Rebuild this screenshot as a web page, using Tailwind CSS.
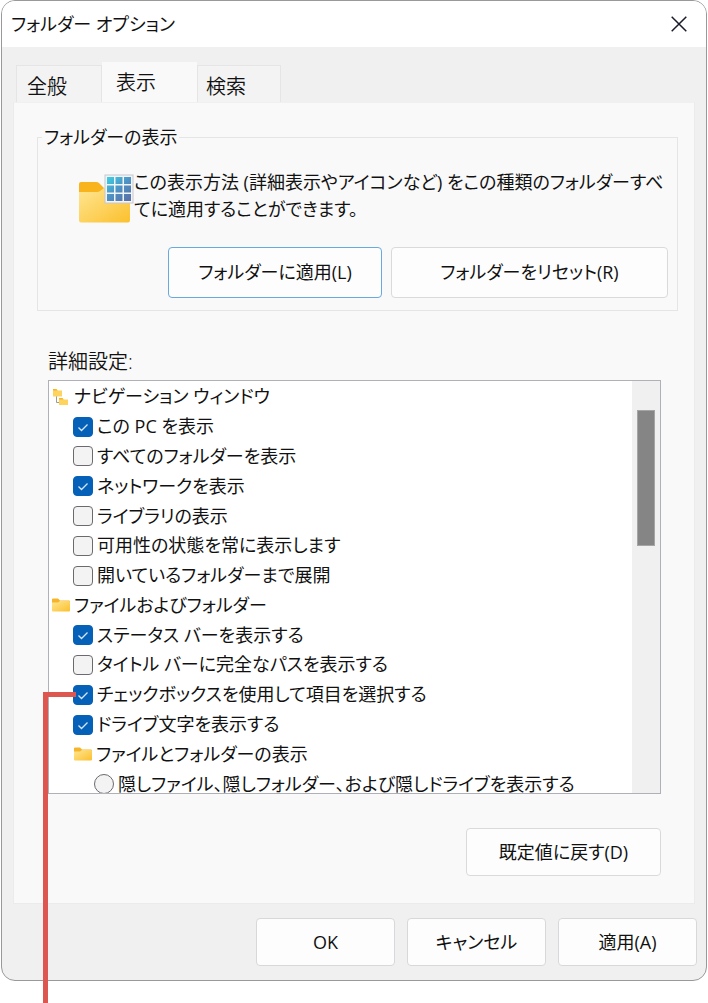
<!DOCTYPE html>
<html lang="ja">
<head>
    <meta charset="UTF-8">
    <meta name="viewport" content="width=device-width, initial-scale=1.0">
    <title>フォルダー オプション</title>
    <script src="https://cdn.jsdelivr.net/npm/@tailwindcss/browser@4"></script>
</head>
<body class="relative min-h-screen bg-white text-[#111] text-lg leading-[27px] font-['Open_Sans','Noto_Sans_CJK_JP',sans-serif] [font-feature-settings:'palt']">
    <svg class="absolute size-0">
        <defs>
            <linearGradient id="folderFill" x1="0" y1="0" x2="1" y2="1">
                <stop offset="0" stop-color="#ffe694"/>
                <stop offset="1" stop-color="#fbc02d"/>
            </linearGradient>
            <linearGradient id="gridFill" gradientUnits="userSpaceOnUse" x1="30" y1="2" x2="50" y2="26">
                <stop offset="0" stop-color="#3ed2e2"/>
                <stop offset="0.5" stop-color="#4e94c6"/>
                <stop offset="1" stop-color="#5a72a8"/>
            </linearGradient>
            <symbol id="folder" viewBox="0 0 18 14">
                <path d="M0 1.5Q0 .5 1 .5H6L8 2.5H17Q18 2.5 18 3.5V6H0Z" fill="#f5b52a"/>
                <path d="M0 4.5H6L8 3H17Q18 3 18 4V12.5Q18 13.5 17 13.5H1Q0 13.5 0 12.5Z" fill="url(#folderFill)"/>
            </symbol>
            <symbol id="check" viewBox="0 0 20 20">
                <path d="M5.5 10.5L8.5 13.5L14.5 7.5" fill="none" stroke="#d5e8fa" stroke-width="1.3"/>
            </symbol>
        </defs>
    </svg>

    <div class="mx-px flex flex-col overflow-hidden rounded-[14px] border border-[#999] bg-[#f0f0f0]">
        <header class="flex h-[46px] items-center justify-between bg-white pl-[9px] pr-[19px]">
            <h1>フォルダー オプション</h1>
            <button type="button" aria-label="閉じる">
                <svg class="size-4" viewBox="0 0 16 16" fill="none" stroke="#1a1a28" stroke-width="1.5"><path d="M.7 .7L15.3 15.3M15.3 .7L.7 15.3"/></svg>
            </button>
        </header>

        <!-- Tabs -->
        <nav class="flex items-end pl-3.5 pt-[15px] text-xl font-[350] leading-[27px]">
            <button type="button" class="h-[37px] w-[86px] border border-b-0 border-[#e5e5e5] bg-[#f3f3f3] pl-2.5 pt-1 text-left">全般</button>
            <button type="button" class="h-10 w-[95px] bg-[#f9f9f9] pl-3.5 text-left">表示</button>
            <button type="button" class="h-[37px] w-[84px] border border-b-0 border-[#e5e5e5] bg-[#f3f3f3] pl-2 pt-1 text-left">検索</button>
        </nav>

        <!-- View panel -->
        <main class="mx-[11px] flex flex-col border border-[#ebebeb] border-t-[#f0f0f0] bg-[#f9f9f9] pb-[27px] pl-[23px] pr-4 pt-[21px]">
            <fieldset class="border border-[#e5e5e5] pb-3 pl-10 pr-[9px]">
                <legend class="-ml-9 px-0.5">フォルダーの表示</legend>
                <div class="flex pt-[18px]">
                    <svg class="mt-[5px] h-[52px] w-14 shrink-0" viewBox="0 0 56 52">
                        <path d="M1 10Q1 8 3 8H18Q20 8 21 9L26 14H50V22H1Z" fill="#f9b31c"/>
                        <path d="M1 18H19Q21 18 22 17L26 14H50Q52 14 52 16V46Q52 48.500 50 48.500H3Q1 48.500 1 46Z" fill="url(#folderFill)"/>
                        <rect x="27" y="1" width="28" height="28" fill="#f1f5f9" stroke="#c8c5cb"/>
                        <path d="M29 3h7v7h-7zM37.500 3h7v7h-7zM46 3h7v7h-7zM29 11.500h7v7h-7zM37.500 11.500h7v7h-7zM46 11.500h7v7h-7zM29 20h7v7h-7zM37.500 20h7v7h-7zM46 20h7v7h-7z" fill="url(#gridFill)"/>
                    </svg>
                    <p>この表示方法 (詳細表示やアイコンなど) をこの種類のフォルダーすべ<wbr>てに適用することができます。</p>
                </div>
                <div class="mt-[21px] flex gap-[9px] pl-[90px]">
                    <button type="button" class="h-[51px] w-[214px] rounded border border-[#69a9dc] bg-[#fdfdfd]">フォルダーに適用(L)</button>
                    <button type="button" class="h-[51px] flex-1 rounded border border-[#dadada] bg-[#fdfdfd]">フォルダーをリセット(R)</button>
                </div>
            </fieldset>

            <h2 class="ml-[11px] mt-[37px] text-xl font-[350] leading-[27px]">詳細設定:</h2>
            <div class="ml-[11px] mr-[17px] mt-[5px] flex h-[414px] overflow-hidden border border-[#b0b0b8] bg-white">
                <ul class="mt-px grid h-[417px] flex-1 auto-rows-fr whitespace-nowrap">
                    <li class="flex items-center gap-1 pl-[3px]">
                        <svg class="h-5 w-[18px]" viewBox="0 0 18 20">
                            <path d="M4.500 8V15.500H9" fill="none" stroke="#9a9a9a"/>
                            <path d="M1 2.500H4.500L6 3.500H10V9.500H1Z" fill="#ffd45e"/>
                            <path d="M1 2H4.500L5.500 3.500H1Z" fill="#f5b52a"/>
                            <path d="M7 11.500H10.500L12 12.500H16V18H7Z" fill="#ffd45e"/>
                            <path d="M7 11H10.500L11.500 12.500H7Z" fill="#f5b52a"/>
                        </svg>
                        ナビゲーション ウィンドウ
                    </li>
                    <li class="flex items-center pl-6">
                        <label class="flex items-center gap-1"><span class="grid"><input type="checkbox" checked class="peer col-start-1 row-start-1 size-5 appearance-none rounded border border-[#6a6a70] bg-[#f3f3f3] checked:border-[#0560b8] checked:bg-[#0560b8]"><svg class="pointer-events-none invisible col-start-1 row-start-1 size-5 peer-checked:visible"><use href="#check"/></svg></span>この PC を表示</label>
                    </li>
                    <li class="flex items-center pl-6">
                        <label class="flex items-center gap-1"><span class="grid"><input type="checkbox" class="peer col-start-1 row-start-1 size-5 appearance-none rounded border border-[#6a6a70] bg-[#f3f3f3] checked:border-[#0560b8] checked:bg-[#0560b8]"><svg class="pointer-events-none invisible col-start-1 row-start-1 size-5 peer-checked:visible"><use href="#check"/></svg></span>すべてのフォルダーを表示</label>
                    </li>
                    <li class="flex items-center pl-6">
                        <label class="flex items-center gap-1"><span class="grid"><input type="checkbox" checked class="peer col-start-1 row-start-1 size-5 appearance-none rounded border border-[#6a6a70] bg-[#f3f3f3] checked:border-[#0560b8] checked:bg-[#0560b8]"><svg class="pointer-events-none invisible col-start-1 row-start-1 size-5 peer-checked:visible"><use href="#check"/></svg></span>ネットワークを表示</label>
                    </li>
                    <li class="flex items-center pl-6">
                        <label class="flex items-center gap-1"><span class="grid"><input type="checkbox" class="peer col-start-1 row-start-1 size-5 appearance-none rounded border border-[#6a6a70] bg-[#f3f3f3] checked:border-[#0560b8] checked:bg-[#0560b8]"><svg class="pointer-events-none invisible col-start-1 row-start-1 size-5 peer-checked:visible"><use href="#check"/></svg></span>ライブラリの表示</label>
                    </li>
                    <li class="flex items-center pl-6">
                        <label class="flex items-center gap-1"><span class="grid"><input type="checkbox" class="peer col-start-1 row-start-1 size-5 appearance-none rounded border border-[#6a6a70] bg-[#f3f3f3] checked:border-[#0560b8] checked:bg-[#0560b8]"><svg class="pointer-events-none invisible col-start-1 row-start-1 size-5 peer-checked:visible"><use href="#check"/></svg></span>可用性の状態を常に表示します</label>
                    </li>
                    <li class="flex items-center pl-6">
                        <label class="flex items-center gap-1"><span class="grid"><input type="checkbox" class="peer col-start-1 row-start-1 size-5 appearance-none rounded border border-[#6a6a70] bg-[#f3f3f3] checked:border-[#0560b8] checked:bg-[#0560b8]"><svg class="pointer-events-none invisible col-start-1 row-start-1 size-5 peer-checked:visible"><use href="#check"/></svg></span>開いているフォルダーまで展開</label>
                    </li>
                    <li class="flex items-center gap-1 pl-[3px]">
                        <svg class="h-3.5 w-[18px]"><use href="#folder"/></svg>
                        ファイルおよびフォルダー
                    </li>
                    <li class="flex items-center pl-6">
                        <label class="flex items-center gap-1"><span class="grid"><input type="checkbox" checked class="peer col-start-1 row-start-1 size-5 appearance-none rounded border border-[#6a6a70] bg-[#f3f3f3] checked:border-[#0560b8] checked:bg-[#0560b8]"><svg class="pointer-events-none invisible col-start-1 row-start-1 size-5 peer-checked:visible"><use href="#check"/></svg></span>ステータス バーを表示する</label>
                    </li>
                    <li class="flex items-center pl-6">
                        <label class="flex items-center gap-1"><span class="grid"><input type="checkbox" class="peer col-start-1 row-start-1 size-5 appearance-none rounded border border-[#6a6a70] bg-[#f3f3f3] checked:border-[#0560b8] checked:bg-[#0560b8]"><svg class="pointer-events-none invisible col-start-1 row-start-1 size-5 peer-checked:visible"><use href="#check"/></svg></span>タイトル バーに完全なパスを表示する</label>
                    </li>
                    <li class="flex items-center pl-6">
                        <label class="flex items-center gap-1"><span class="grid"><input type="checkbox" checked class="peer col-start-1 row-start-1 size-5 appearance-none rounded border border-[#6a6a70] bg-[#f3f3f3] checked:border-[#0560b8] checked:bg-[#0560b8]"><svg class="pointer-events-none invisible col-start-1 row-start-1 size-5 peer-checked:visible"><use href="#check"/></svg></span>チェックボックスを使用して項目を選択する</label>
                    </li>
                    <li class="flex items-center pl-6">
                        <label class="flex items-center gap-1"><span class="grid"><input type="checkbox" checked class="peer col-start-1 row-start-1 size-5 appearance-none rounded border border-[#6a6a70] bg-[#f3f3f3] checked:border-[#0560b8] checked:bg-[#0560b8]"><svg class="pointer-events-none invisible col-start-1 row-start-1 size-5 peer-checked:visible"><use href="#check"/></svg></span>ドライブ文字を表示する</label>
                    </li>
                    <li class="flex items-center gap-1 pl-[25px]">
                        <svg class="h-3.5 w-[18px]"><use href="#folder"/></svg>
                        ファイルとフォルダーの表示
                    </li>
                    <li class="flex items-center pl-[45px]">
                        <label class="flex items-center gap-1"><input type="radio" name="hidden-files" class="size-5 appearance-none rounded-full border border-[#6a6a70] bg-[#f3f3f3]">隠しファイル、隠しフォルダー、および隠しドライブを表示する</label>
                    </li>
                </ul>
                <!-- Scrollbar -->
                <div class="w-7 bg-[#f0f0f0] pl-[5px] pt-[29px]">
                    <div class="h-[136px] w-[18px] border border-[#a5a5a5] bg-[#858585]"></div>
                </div>
            </div>
            <button type="button" class="mr-[17px] mt-[34px] h-12 w-[195px] self-end rounded border border-[#dadada] bg-[#fdfdfd]">既定値に戻す(D)</button>
        </main>

        <footer class="flex justify-end gap-3 pb-3.5 pr-[9px] pt-3.5">
            <button type="button" class="h-12 w-[139px] rounded border border-[#d8d8da] bg-[#fdfdfd]">OK</button>
            <button type="button" class="h-12 w-[139px] rounded border border-[#d8d8da] bg-[#fdfdfd]">キャンセル</button>
            <button type="button" class="h-12 w-[139px] rounded border border-[#d8d8da] bg-[#fdfdfd]">適用(A)</button>
        </footer>
    </div>

    <!-- Callout line to the item check boxes option -->
    <div class="pointer-events-none absolute bottom-0 left-[43px] top-[692px] w-[33px] border-l-5 border-t-5 border-[#de5650]"></div>
</body>
</html>
